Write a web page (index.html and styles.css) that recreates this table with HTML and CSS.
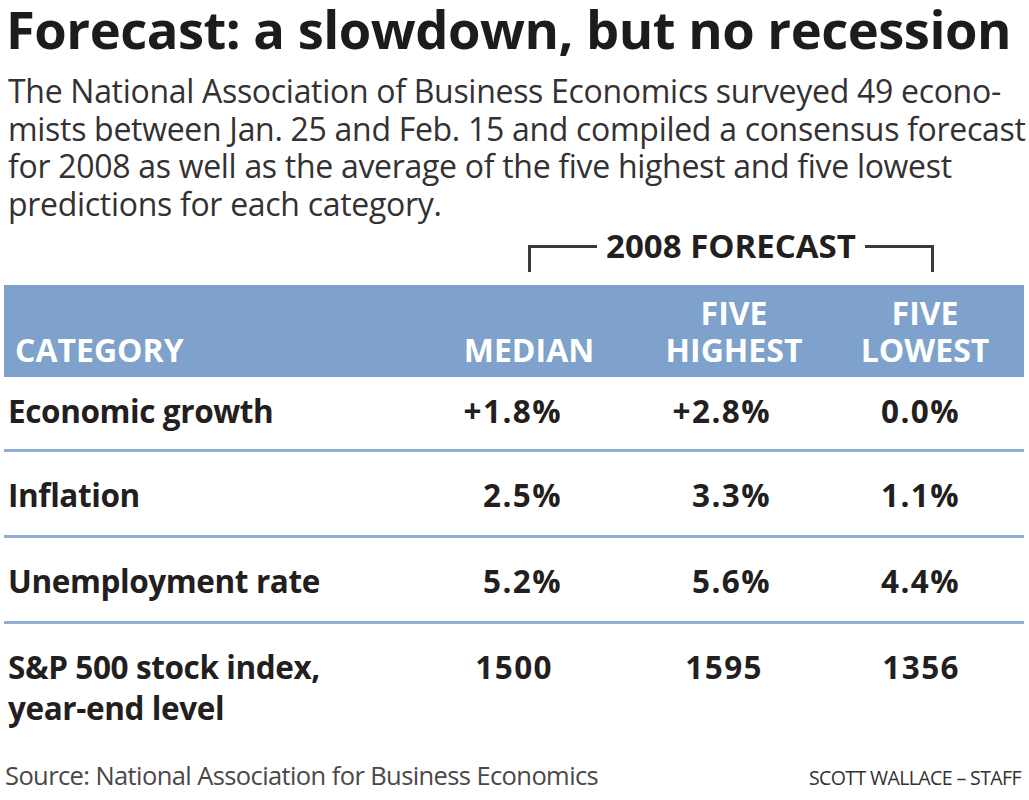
FILE: index.html
```html
<!DOCTYPE html>
<html lang="en">
<head>
<meta charset="utf-8">
<title>Forecast: a slowdown, but no recession</title>
<link rel="stylesheet" href="styles.css">
</head>
<body>
<main class="graphic">
  <h1 class="title">Forecast: a slowdown, but no recession</h1>
  <p class="intro">The National Association of Business Economics surveyed 49 econo-<br>mists between Jan. 25 and Feb. 15 and compiled a consensus forecast<br>for 2008 as well as the average of the five highest and five lowest<br>predictions for each category.</p>

  <div class="span-label">
    <span class="bracket bracket-left"></span>
    <span class="span-text">2008 FORECAST</span>
    <span class="bracket bracket-right"></span>
  </div>

  <div class="table">
    <div class="row head">
      <div class="cell cat">CATEGORY</div>
      <div class="cell hmed">MEDIAN</div>
      <div class="cell hhigh">FIVE<br>HIGHEST</div>
      <div class="cell hlow">FIVE<br>LOWEST</div>
    </div>
    <div class="row body first">
      <div class="cell cat">Economic growth</div>
      <div class="cell med">+1.8%</div>
      <div class="cell high">+2.8%</div>
      <div class="cell low">0.0%</div>
    </div>
    <div class="row body">
      <div class="cell cat">Inflation</div>
      <div class="cell med">2.5%</div>
      <div class="cell high">3.3%</div>
      <div class="cell low">1.1%</div>
    </div>
    <div class="row body">
      <div class="cell cat">Unemployment rate</div>
      <div class="cell med">5.2%</div>
      <div class="cell high">5.6%</div>
      <div class="cell low">4.4%</div>
    </div>
    <div class="row body last">
      <div class="cell cat">S&amp;P 500 stock index,<br>year-end level</div>
      <div class="cell med whole">1500</div>
      <div class="cell high whole">1595</div>
      <div class="cell low">1356</div>
    </div>
  </div>

  <footer class="foot">
    <span class="source">Source: National Association for Business Economics</span>
    <span class="credit">SCOTT WALLACE – STAFF</span>
  </footer>
</main>
</body>
</html>
```

FILE: styles.css
```css
html, body {
  margin: 0;
  padding: 0;
  background: #ffffff;
}

.graphic {
  width: 1029px;
  height: 800px;
  overflow: hidden;
  font-family: "Open Sans", "Noto Sans", sans-serif;
  color: #231f20;
}

.title {
  margin: 0;
  padding: 0 0 0 6px;
  font-size: 52.5px;
  font-weight: 700;
  line-height: 58px;
  letter-spacing: -0.5px;
  color: #1e1b1c;
  white-space: nowrap;
}

.intro {
  margin: 14px 0 0 0;
  padding-left: 8px;
  font-size: 32px;
  line-height: 37.5px;
  letter-spacing: -0.3px;
  color: #333132;
  white-space: nowrap;
}

.span-label {
  display: flex;
  align-items: flex-start;
  width: 406px;
  height: 40px;
  margin: 23px 0 0 528px;
}

.bracket {
  height: 24px;
  border-top: 3px solid #3a3a3a;
  width: 66px;
  flex: none;
}

.bracket-left {
  border-left: 3px solid #3a3a3a;
}

.bracket-right {
  border-right: 3px solid #3a3a3a;
}

.span-text {
  flex: 1;
  margin-top: -14px;
  text-align: center;
  font-size: 33px;
  font-weight: 700;
  line-height: 30px;
  letter-spacing: 0;
  color: #231f20;
  white-space: nowrap;
}

.table {
  margin: 0 5px 0 4px;
}

.row {
  display: grid;
  grid-template-columns: 430px 190px 220px 1fr;
  align-items: start;
}

.head {
  height: 92px;
  background: #7ea2cb;
  align-items: end;
  color: #ffffff;
  font-size: 32px;
  font-weight: 700;
  line-height: 37px;
  letter-spacing: 0;
}

.head .cell {
  padding-bottom: 9px;
  white-space: nowrap;
}

.head .cat {
  padding-left: 11px;
}

.hmed, .hhigh {
  text-align: center;
}

.hlow {
  text-align: center;
  padding-right: 18px;
}

.body {
  font-size: 31.5px;
  font-weight: 700;
  line-height: 41px;
  letter-spacing: -0.4px;
  color: #231f20;
  padding: 22px 0 20px 0;
  border-top: 3px solid #8eaed3;
}

.body.first {
  border-top: none;
  padding: 13px 0 18px 0;
}

.body.last {
  padding-bottom: 0;
}

.body .cat {
  padding-left: 4px;
  white-space: nowrap;
}

.med, .high, .low {
  text-align: right;
  letter-spacing: 1.4px;
}

.med {
  padding-right: 62px;
}

.high {
  padding-right: 73px;
}

.low {
  padding-right: 64px;
}

.med.whole {
  padding-right: 71px;
}

.high.whole {
  padding-right: 81px;
}

.foot {
  display: flex;
  justify-content: space-between;
  align-items: baseline;
  margin: 30px 8px 0 5px;
}

.source {
  font-size: 25.5px;
  letter-spacing: -0.6px;
  color: #4a4849;
  white-space: nowrap;
}

.credit {
  font-size: 19.5px;
  letter-spacing: -0.6px;
  color: #333132;
  white-space: nowrap;
}
```
